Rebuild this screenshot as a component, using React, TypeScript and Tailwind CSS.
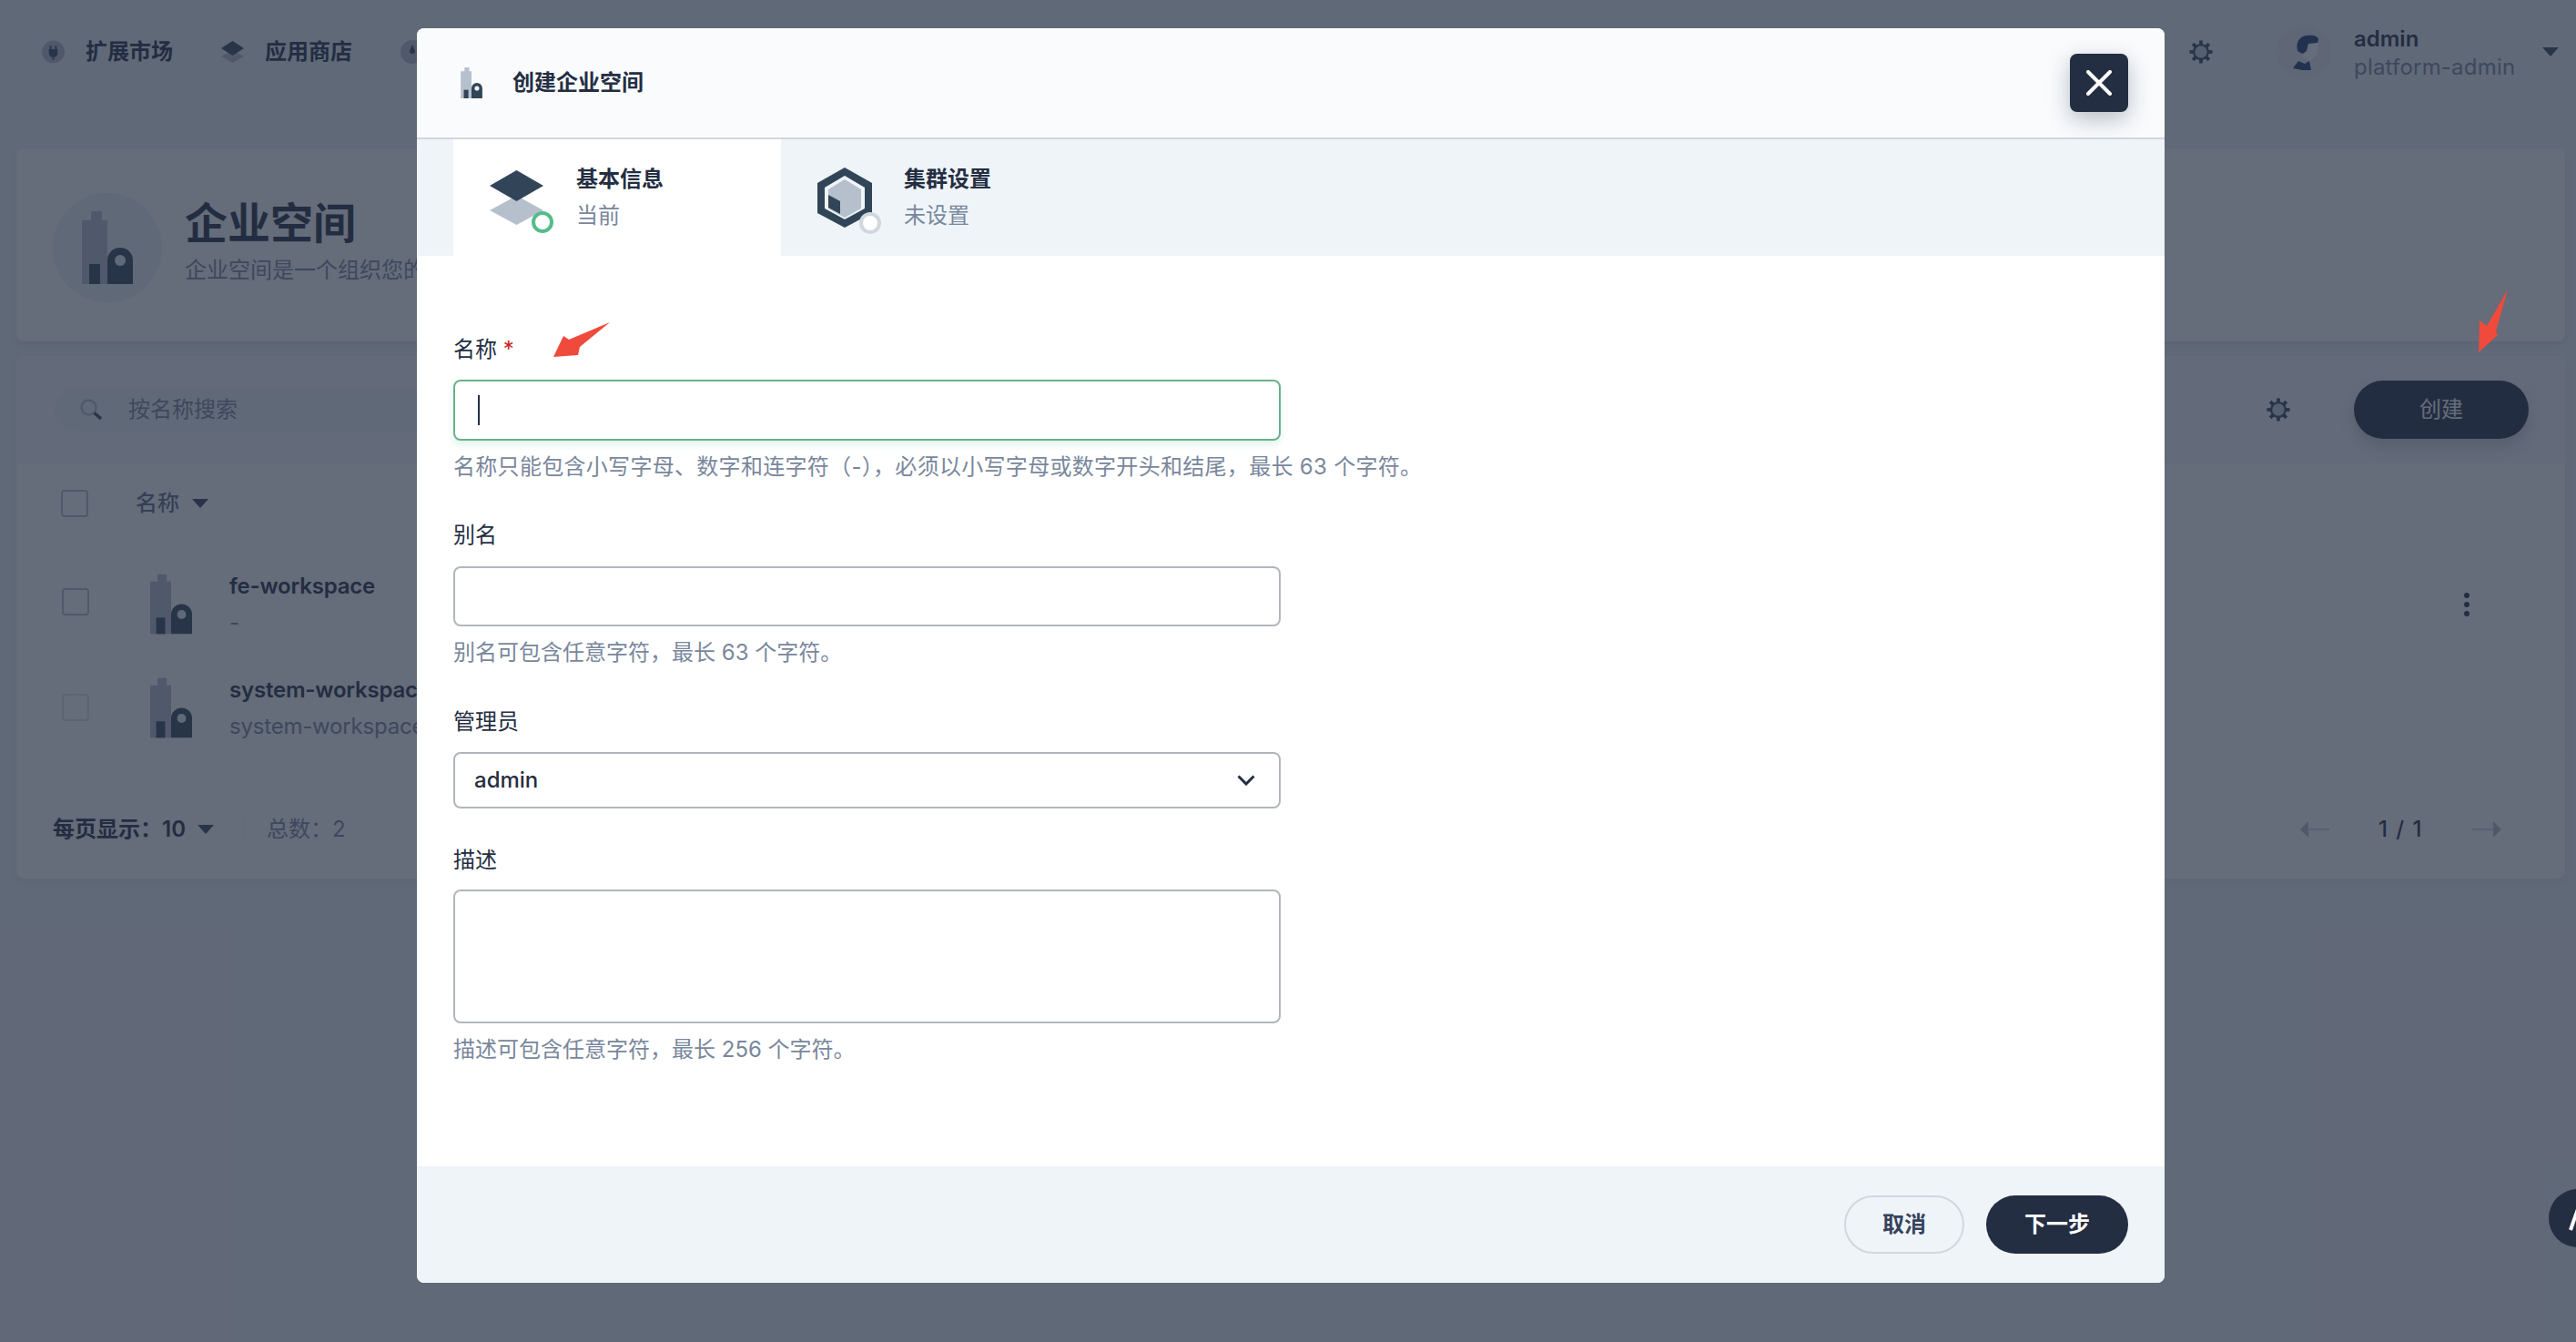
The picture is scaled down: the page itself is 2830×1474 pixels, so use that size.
import React from "react";

const FONT = 'font-["Inter","Noto_Sans_CJK_SC",sans-serif]';

function WorkspaceIcon({ className }: { className: string }) {
  return (
    <svg viewBox="0 0 56 80" className={className}>
      <path d="M10 0h12v10h6v70H0V10h10z" fill="#b6c0cc" />
      <rect x="8" y="58" width="12" height="22" fill="#324558" />
      <path d="M28 80V54a14 14 0 0 1 28 0v26z" fill="#324558" />
      <circle cx="42" cy="54" r="6" fill="#eff4f9" />
    </svg>
  );
}

function Gear({ className }: { className: string }) {
  const teeth = [0, 45, 90, 135, 180, 225, 270, 315];
  return (
    <svg viewBox="0 0 28 28" className={className}>
      {teeth.map((a) => (
        <rect key={a} x="12" y="0.5" width="4" height="6" fill="#324558" transform={`rotate(${a} 14 14)`} />
      ))}
      <circle cx="14" cy="14" r="8.500" fill="#c7d3e0" stroke="#324558" strokeWidth="2.500" />
    </svg>
  );
}

function Caret({ className }: { className: string }) {
  return (
    <svg viewBox="0 0 18 10" className={className}>
      <path d="M0 0h18L9 10z" fill="#324558" />
    </svg>
  );
}

function Checkbox({ faint }: { faint?: boolean }) {
  return faint ? (
    <div className="w-[30px] h-[30px] shrink-0 rounded border-2 border-[#dfe5ec] bg-white" />
  ) : (
    <div className="w-[30px] h-[30px] shrink-0 rounded border-2 border-[#b6c0cc] bg-white" />
  );
}

export default function App() {
  return (
    <div className={`relative w-[2830px] h-[1474px] overflow-hidden bg-[#eff4f9] text-[24px] text-[#242e42] ${FONT}`}>
      {/* top navigation */}
      <header className="flex items-center h-[114px] pl-[46px] pr-[19px]">
        <div className="flex items-center gap-[53px] font-semibold">
          <div className="flex items-center gap-[23px]">
            <svg viewBox="0 0 26 26" className="w-[25px] h-[26px]">
              <circle cx="13" cy="13" r="13" fill="#b6c0cc" />
              <path d="M9 6h2v4h4V6h2v4h1v5a5 5 0 0 1-4 4v3h-2v-3a5 5 0 0 1-4-4v-5h1z" fill="#324558" />
            </svg>
            <span>扩展市场</span>
          </div>
          <div className="flex items-center gap-[23px]">
            <svg viewBox="0 0 25 24" className="w-[25px] h-[24px]">
              <path d="M12.500 10L25 17l-12.500 7L0 17z" fill="#b6c0cc" />
              <path d="M12.500 0L25 8l-12.500 8L0 8z" fill="#324558" />
            </svg>
            <span>应用商店</span>
          </div>
          <div className="flex items-center gap-[23px]">
            <svg viewBox="0 0 26 26" className="w-[26px] h-[26px]">
              <circle cx="13" cy="13" r="13" fill="#b6c0cc" />
              <path d="M13 5l3 7a3 3 0 0 1-6 0z" fill="#324558" />
            </svg>
            <span>平台管理</span>
          </div>
        </div>
        <div className="ml-auto flex items-center">
          <Gear className="w-[26px] h-[28px] mr-[70px]" />
          <svg viewBox="0 0 60 56" className="w-[60px] h-[56px] mr-[25px]">
            <ellipse cx="30" cy="28" rx="30" ry="28" fill="#e9edf2" />
            <path d="M29 18l17-2-1 14-8 8-8-3z" fill="#ffffff" />
            <path d="M24 28C20 20 24 11 33 10c6-1 13 0 13 5l-1 3-10 1-2 8-4 3z" fill="#1f3d6b" />
            <path d="M18 46l6-8 7 3 5-3 2 10H28z" fill="#1f3d6b" />
          </svg>
          <div className="w-[207px] mt-[1px]">
            <div className="leading-[31px] font-semibold">admin</div>
            <div className="leading-[31px] text-[#79879c] tracking-[0.2px]">platform-admin</div>
          </div>
          <Caret className="w-[18px] h-[10px]" />
        </div>
      </header>

      {/* banner */}
      <section className="ml-[18px] mt-[49px] w-[2800px] h-[212px] rounded-lg bg-white flex items-start pt-[49px] pl-[40px] gap-[25px] shadow-[0_4px_8px_0_rgba(36,46,66,0.06)]">
        <div className="w-[120px] h-[120px] rounded-full bg-[#eef3f8] flex items-center justify-center shrink-0">
          <WorkspaceIcon className="w-[56px] h-[80px]" />
        </div>
        <div className="mt-[5px]">
          <div className="text-[47px] leading-[56px] font-semibold">企业空间</div>
          <div className="mt-[8px] leading-[32px] text-[#79879c] whitespace-nowrap">
            企业空间是一个组织您的项目和 DevOps 项目、管理资源访问权限以及在团队内部共享资源等的逻辑单元。
          </div>
        </div>
      </section>

      {/* table card */}
      <section className="ml-[18px] mt-[16px] w-[2800px] h-[574px] rounded-lg bg-white flex flex-col shadow-[0_4px_8px_0_rgba(36,46,66,0.06)]">
        <div className="flex items-center h-[118px] pl-[42px] pr-[40px] rounded-t-lg bg-[#f7f9fc]">
          <div className="flex items-center w-[1900px] h-[46px] rounded-full bg-[#eff4f9] pl-[28px]">
            <svg viewBox="0 0 24 24" className="w-[24px] h-[24px] mr-[29px]">
              <circle cx="9.500" cy="9.500" r="8" fill="none" stroke="#b6c0cc" strokeWidth="2.500" />
              <path d="M15.500 15.500L23 22" stroke="#324558" strokeWidth="3.500" />
            </svg>
            <span className="text-[#79879c]">按名称搜索</span>
          </div>
          <div className="ml-auto flex items-center">
            <Gear className="w-[26px] h-[28px] mr-[70px]" />
            <div className="w-[192px] h-[64px] rounded-full bg-[#242e42] text-white flex items-center justify-center shadow-[0_8px_16px_0_rgba(36,46,66,0.2)]">
              创建
            </div>
          </div>
        </div>

        <div className="flex items-center h-[88px] pl-[49px]">
          <Checkbox />
          <span className="ml-[52px] text-[#5f6d82] font-medium">名称</span>
          <Caret className="ml-[14px] w-[18px] h-[10px]" />
        </div>

        <div className="flex items-center h-[125px] pl-[50px] pt-[8px] border-b border-[#f7f9fc]">
          <div className="mb-[4px]">
            <Checkbox />
          </div>
          <WorkspaceIcon className="ml-[67px] w-[46px] h-[67px] shrink-0" />
          <div className="ml-[41px] mt-[2px]">
            <div className="leading-[40px] font-semibold tracking-[-0.2px]">fe-workspace</div>
            <div className="leading-[40px] text-[#79879c]">-</div>
          </div>
          <svg viewBox="0 0 6 26" className="ml-auto mr-[105px] mt-[2px] w-[6px] h-[26px]">
            <circle cx="3" cy="3" r="3" fill="#242e42" />
            <circle cx="3" cy="13" r="3" fill="#242e42" />
            <circle cx="3" cy="23" r="3" fill="#242e42" />
          </svg>
        </div>

        <div className="flex items-center h-[111px] pl-[50px] border-b border-[#f7f9fc]">
          <Checkbox faint />
          <WorkspaceIcon className="ml-[67px] w-[46px] h-[67px] shrink-0" />
          <div className="ml-[41px] mt-[1px]">
            <div className="leading-[40px] font-semibold tracking-[-0.2px]">system-workspace</div>
            <div className="leading-[40px] text-[#79879c] tracking-[-0.2px]">system-workspace</div>
          </div>
        </div>

        <div className="flex flex-1 items-center pl-[40px] pr-[70px] pt-[24px]">
          <span className="font-semibold">每页显示：10</span>
          <Caret className="ml-[13px] w-[18px] h-[10px]" />
          <div className="ml-[32px] w-px h-[24px] bg-[#eff4f9]" />
          <span className="ml-[25px] text-[#79879c]">总数：2</span>
          <div className="ml-auto flex items-center">
            <svg viewBox="0 0 32 18" className="w-[32px] h-[18px]">
              <path d="M0 9l9-9v18z" fill="#b6c0cc" />
              <path d="M8 8h24v2H8z" fill="#cfd7e0" />
            </svg>
            <span className="mx-[54px] font-medium whitespace-nowrap tracking-[1.500px]">1 / 1</span>
            <svg viewBox="0 0 32 18" className="w-[32px] h-[18px]">
              <path d="M32 9l-9-9v18z" fill="#b6c0cc" />
              <path d="M0 8h24v2H0z" fill="#cfd7e0" />
            </svg>
          </div>
        </div>
      </section>

      {/* backdrop */}
      <div className="absolute inset-0 bg-[rgba(36,46,66,0.7)]" />

      {/* scroll to top button */}
      <div className="absolute left-[2800px] top-[1306px] w-[64px] h-[64px] rounded-full bg-[#242e42] flex items-center justify-center">
        <svg viewBox="0 0 30 30" className="w-[30px] h-[30px]">
          <path d="M7 28L15 5l8 23" fill="none" stroke="#ffffff" strokeWidth="4" />
        </svg>
      </div>

      {/* modal */}
      <div className="absolute left-[458px] top-[31px] w-[1920px] h-[1378px] rounded-lg overflow-hidden bg-white flex flex-col">
        <div className="flex items-center h-[122px] shrink-0 pl-[48px] pr-[40px] bg-[#f9fbfd] border-b-2 border-[#d1d7de]">
          <WorkspaceIcon className="w-[24px] h-[34px]" />
          <span className="ml-[33px] font-semibold">创建企业空间</span>
          <div className="ml-auto w-[64px] h-[64px] rounded-lg bg-[#242e42] flex items-center justify-center shadow-[0_8px_24px_0_rgba(36,46,66,0.3)]">
            <svg viewBox="0 0 28 28" className="w-[28px] h-[28px]">
              <path d="M2 2l24 24M26 2L2 26" stroke="#ffffff" strokeWidth="4" strokeLinecap="round" />
            </svg>
          </div>
        </div>

        <div className="flex h-[128px] shrink-0 pl-[40px] bg-[#eff4f9]">
          <div className="flex w-[360px] bg-white pl-[40px] pt-[30px]">
            <svg viewBox="0 0 75 74" className="w-[75px] h-[74px] mr-[20px] shrink-0">
              <path d="M29.500 32L59 48 29.500 64 0 48z" fill="#b6c0cc" />
              <path d="M29.500 4L59 21 29.500 38 0 21z" fill="#324558" />
              <circle cx="58" cy="61" r="10" fill="#ffffff" stroke="#55bc8a" strokeWidth="4" />
            </svg>
            <div className="-mt-[6px]">
              <div className="leading-[40px] font-bold">基本信息</div>
              <div className="leading-[40px] text-[#79879c]">当前</div>
            </div>
          </div>
          <div className="flex pl-[40px] pt-[30px]">
            <svg viewBox="0 0 75 74" className="w-[75px] h-[74px] mr-[20px] shrink-0">
              <path d="M30 1l30 17v33L30 67 0 51V18z" fill="#324558" />
              <path d="M30 10l22 13v23L30 58 8 46V23z" fill="#eff4f9" />
              <path d="M30 14l18 11v21L30 56 12 46V25z" fill="#b6c0cc" />
              <path d="M12 31l13 7v14l-13-7z" fill="#324558" />
              <circle cx="58" cy="62" r="10" fill="#ffffff" stroke="#d1d7de" strokeWidth="4" />
            </svg>
            <div className="-mt-[6px]">
              <div className="leading-[40px] font-bold">集群设置</div>
              <div className="leading-[40px] text-[#79879c]">未设置</div>
            </div>
          </div>
        </div>

        <div className="flex-1 pl-[40px] pt-[87px]">
          <div className="leading-[32px]">
            名称 <span className="text-[#ca2621]">*</span>
          </div>
          <div className="mt-[17px] w-[909px] h-[67px] rounded-lg border-2 border-[#6cb08a] flex items-center pl-[25px] shadow-[0_4px_8px_0_rgba(85,188,138,0.2)]">
            <div className="w-[2px] h-[33px] bg-[#242e42]" />
          </div>
          <div className="mt-[13px] leading-[32px] text-[#79879c] whitespace-nowrap tracking-[0.3px]">
            名称只能包含小写字母、数字和连字符（-），必须以小写字母或数字开头和结尾，最长 63 个字符。
          </div>

          <div className="mt-[43px] leading-[32px]">别名</div>
          <div className="mt-[18px] w-[909px] h-[66px] rounded-lg border-2 border-[#b2b6bc]" />
          <div className="mt-[13px] leading-[32px] text-[#79879c]">别名可包含任意字符，最长 63 个字符。</div>

          <div className="mt-[44px] leading-[32px]">管理员</div>
          <div className="mt-[17px] w-[909px] h-[62px] rounded-lg border-2 border-[#b2b6bc] flex items-center pl-[21px] pr-[26px]">
            <span className="font-medium">admin</span>
            <svg viewBox="0 0 20 12" className="ml-auto w-[20px] h-[12px]">
              <path d="M1.500 1.500L10 10l8.500-8.500" fill="none" stroke="#242e42" strokeWidth="3" />
            </svg>
          </div>

          <div className="mt-[41px] leading-[32px]">描述</div>
          <div className="mt-[16px] w-[909px] h-[147px] rounded-lg border-2 border-[#b2b6bc]" />
          <div className="mt-[13px] leading-[32px] text-[#79879c]">描述可包含任意字符，最长 256 个字符。</div>
        </div>

        <div className="flex items-start justify-end gap-[24px] h-[128px] shrink-0 pt-[32px] pr-[40px] bg-[#eff4f9]">
          <div className="w-[132px] h-[64px] rounded-full border-2 border-[#d1d7de] flex items-center justify-center font-semibold text-[#36435c]">
            取消
          </div>
          <div className="w-[156px] h-[64px] rounded-full bg-[#242e42] text-white flex items-center justify-center font-semibold">
            下一步
          </div>
        </div>
      </div>

      {/* red annotation arrows */}
      <svg viewBox="0 0 64 40" className="absolute left-[607px] top-[353px] w-[64px] h-[40px]">
        <path d="M63 1L30 28l-2 9L1 39 12 16l6 4z" fill="#ef4a3c" />
      </svg>
      <svg viewBox="0 0 34 70" className="absolute left-[2722px] top-[318px] w-[34px] h-[70px]">
        <path d="M33 0L20 46l2 4L1 69 2 34l8 6z" fill="#ef4a3c" />
      </svg>
    </div>
  );
}
